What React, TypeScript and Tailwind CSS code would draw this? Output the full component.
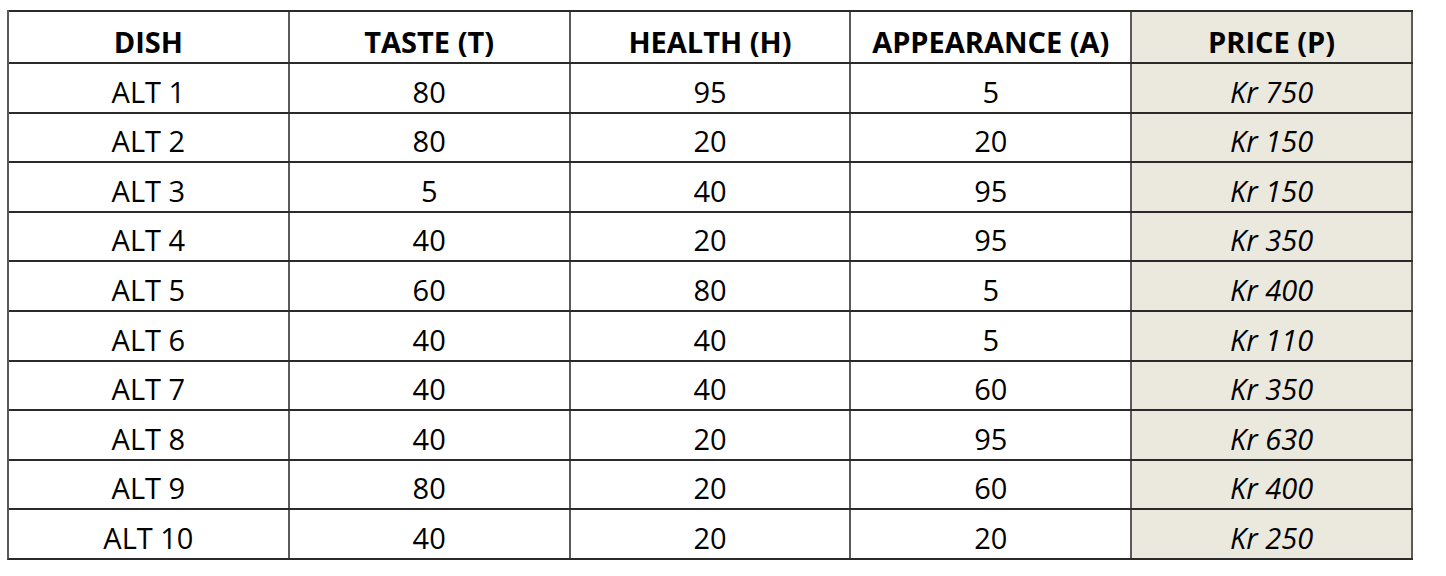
const ROWS: [string, number, number, number, string][] = [
  ['ALT 1', 80, 95, 5, 'Kr 750'],
  ['ALT 2', 80, 20, 20, 'Kr 150'],
  ['ALT 3', 5, 40, 95, 'Kr 150'],
  ['ALT 4', 40, 20, 95, 'Kr 350'],
  ['ALT 5', 60, 80, 5, 'Kr 400'],
  ['ALT 6', 40, 40, 5, 'Kr 110'],
  ['ALT 7', 40, 40, 60, 'Kr 350'],
  ['ALT 8', 40, 20, 95, 'Kr 630'],
  ['ALT 9', 80, 20, 60, 'Kr 400'],
  ['ALT 10', 40, 20, 20, 'Kr 250'],
];

const HEADERS = ['DISH', 'TASTE (T)', 'HEALTH (H)', 'APPEARANCE (A)'];

const cell = 'w-[281px] flex items-end justify-center border-r-2 border-[#5a5a5a]';

export default function App() {
  return (
    <div className="w-[1446px] h-[576px] bg-white font-['Open_Sans',sans-serif] text-black">
      <div className="ml-[7px] pt-[10px] w-[1406px]">
        <div className="border-l-2 border-[#5a5a5a] border-b-2 border-b-[#2a2a2a]">
          <div className="flex h-[52px] border-t-2 border-[#2a2a2a] text-[29px] leading-none font-bold">
            {HEADERS.map((h) => (
              <div key={h} className={`${cell} pb-[6px]`}>
                {h}
              </div>
            ))}
            <div className="w-[281px] flex items-end justify-center pb-[6px] bg-[#ebe8de] border-r-2 border-[#5a5a5a]">
              PRICE (P)
            </div>
          </div>
          {ROWS.map(([dish, t, h, a, p]) => (
            <div key={dish} className="flex h-[49.6px] border-t-2 border-[#2a2a2a] text-[29px] leading-none">
              <div className={`${cell} pb-[6px]`}>{dish}</div>
              <div className={`${cell} pb-[6px]`}>{t}</div>
              <div className={`${cell} pb-[6px]`}>{h}</div>
              <div className={`${cell} pb-[6px]`}>{a}</div>
              <div className="w-[281px] flex items-end justify-center pb-[6px] bg-[#ebe8de] border-r-2 border-[#5a5a5a] italic">
                {p}
              </div>
            </div>
          ))}
        </div>
      </div>
    </div>
  );
}
